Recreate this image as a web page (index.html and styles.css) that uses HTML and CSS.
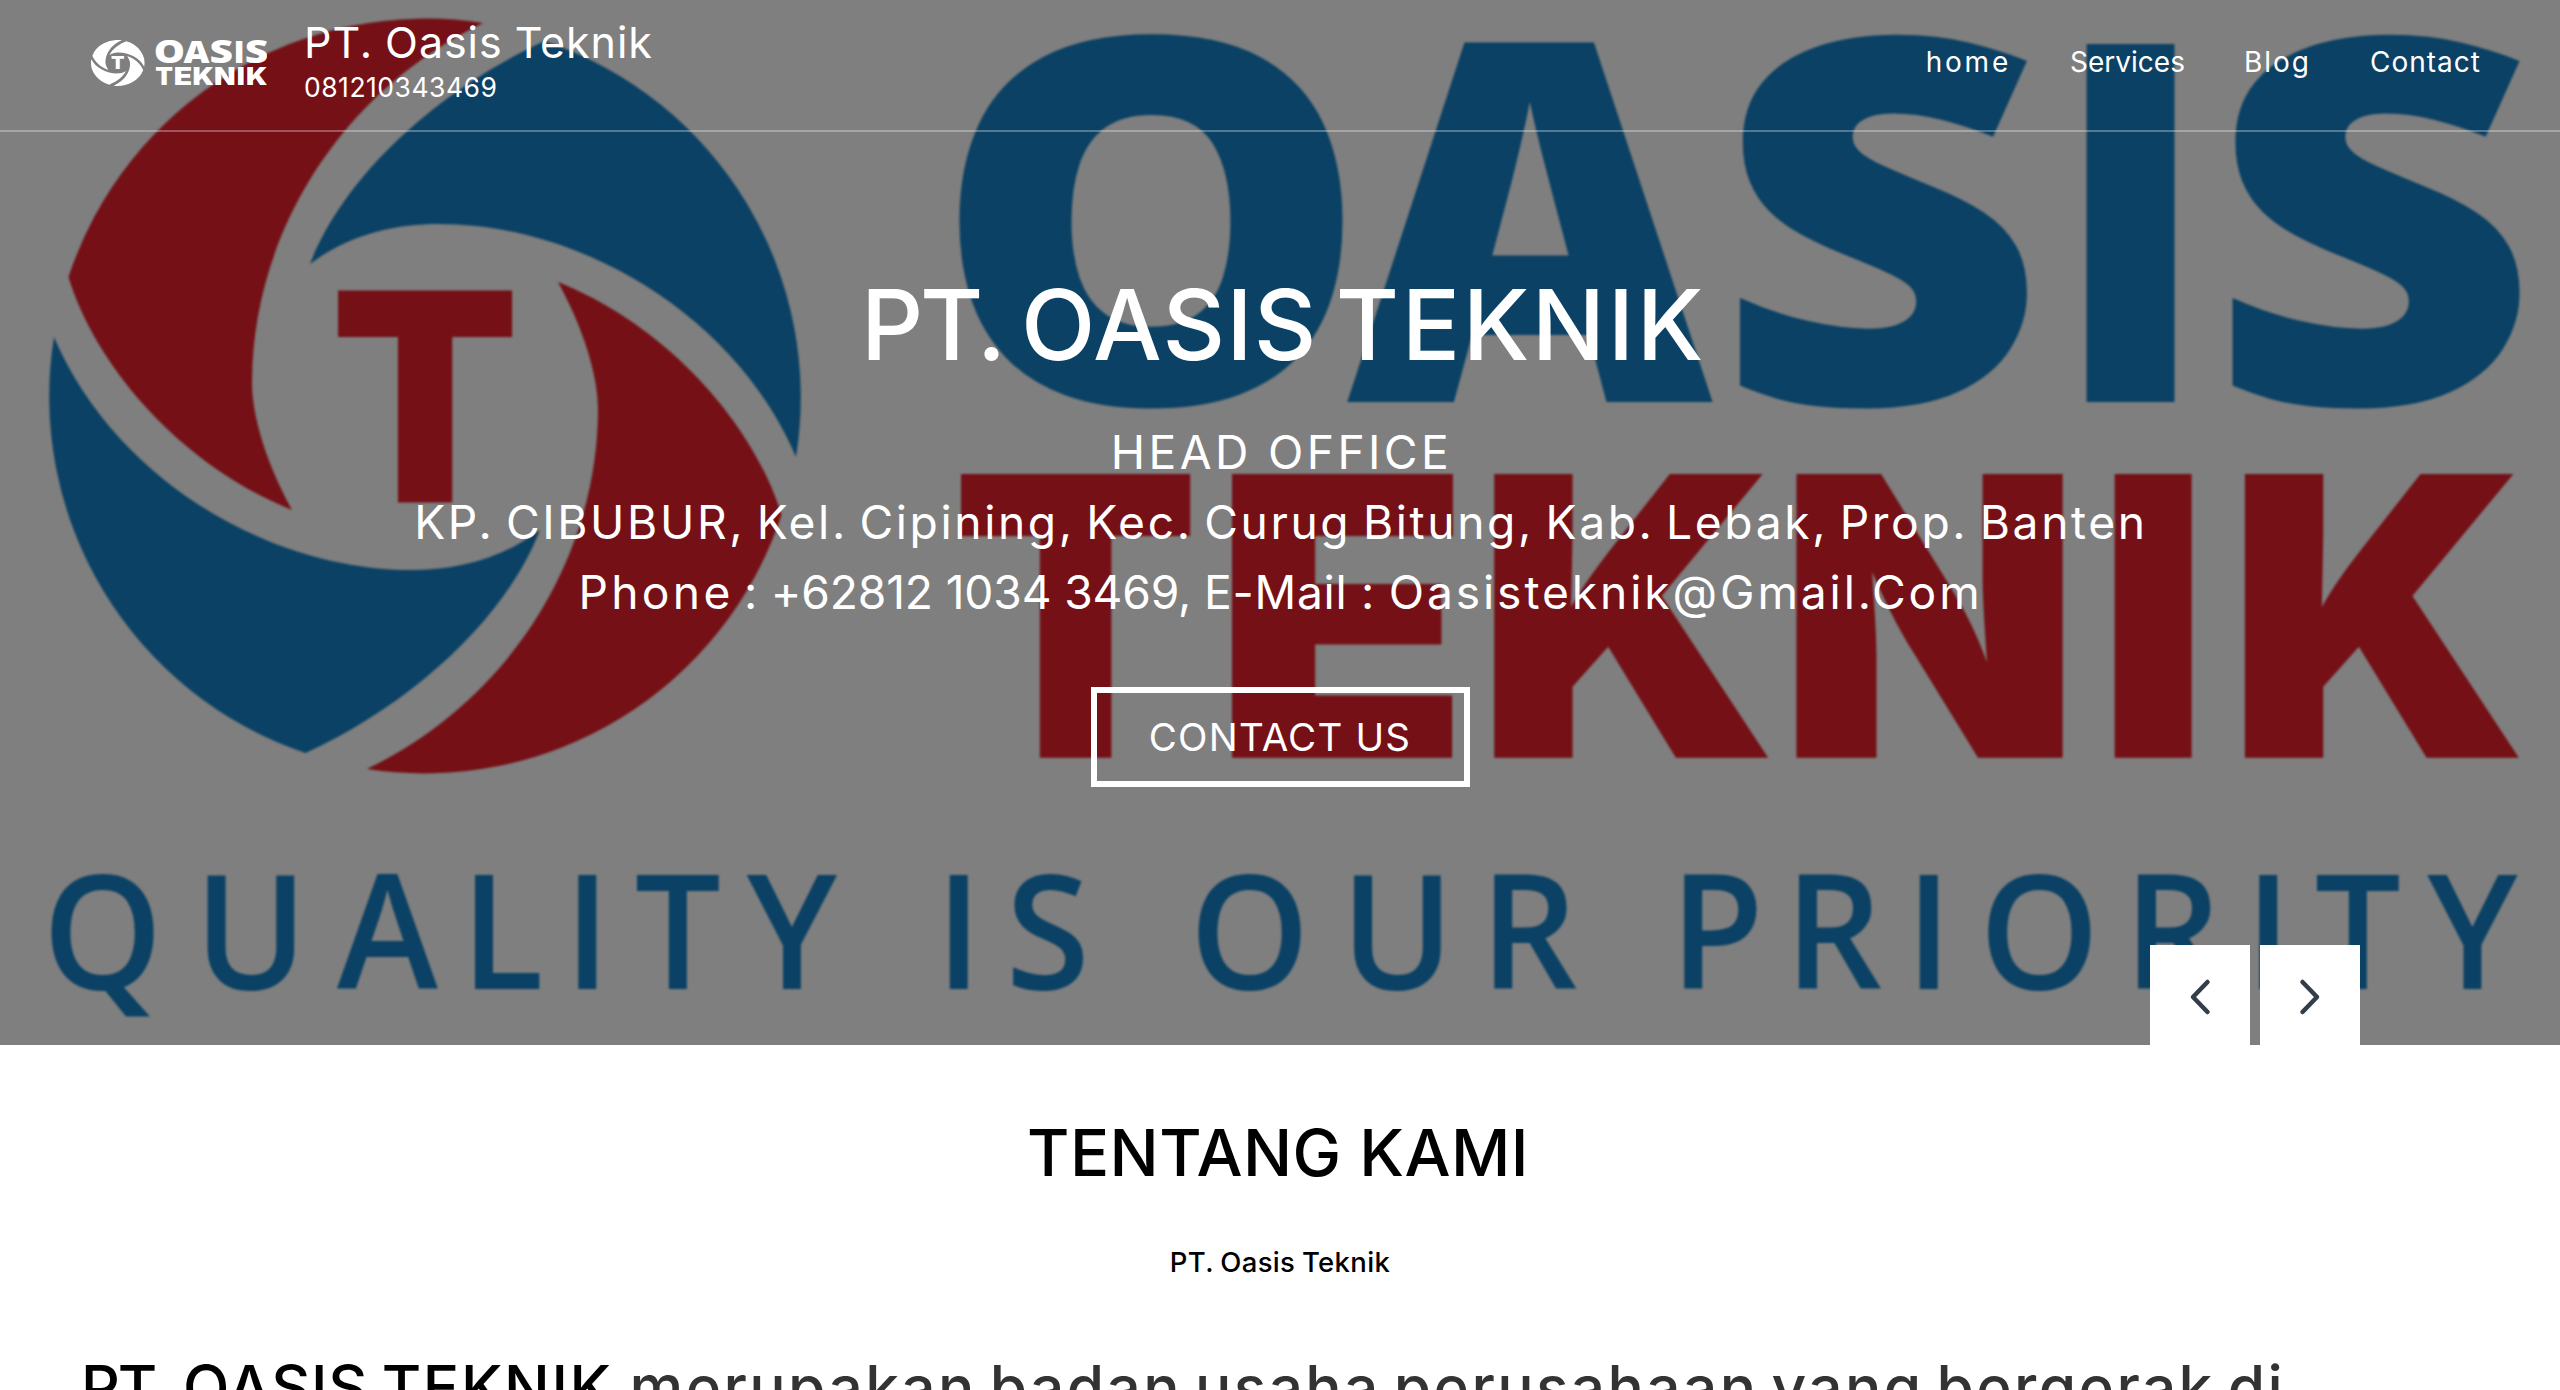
FILE: index.html
```
<!DOCTYPE html>
<html lang="id">
<head>
<meta charset="utf-8">
<title>PT. Oasis Teknik</title>
<link rel="stylesheet" href="styles.css">
</head>
<body>
<section class="hero">
  <svg class="hero-art" viewBox="0 0 2560 1045" preserveAspectRatio="none" aria-hidden="true">
    <defs>
      <g id="mark">
        <path class="red" id="swirl-red" d="M483 23A376 376 0 0 0 68.500 277C95 365 180 465 292 510C262 455 252 410 252 383C252 240 335 95 483 23Z"/>
        <use href="#swirl-red" transform="rotate(180 425 396)"/>
        <path class="blue" id="swirl-blue" d="M54 337A376 376 0 0 0 305.500 753C410 705 505 620 540 530C500 560 455 570 411 570C270 570 115 480 54 337Z"/>
        <use href="#swirl-blue" transform="rotate(180 425 397)"/>
        <text class="red mark-t" transform="scale(.945 1)" x="349.800" y="502.500">T</text>
        <g class="blue word-oasis">
          <text transform="translate(931.400 403.500) scale(1.1 1.015)">O</text>
          <text transform="translate(1347.300 402) scale(1.003 1)">A</text>
          <text transform="translate(1714.800 403.500) scale(1.144 1.015)">S</text>
          <text transform="translate(2051.600 402) scale(.904 1)">I</text>
          <text transform="translate(2207.400 403.500) scale(1.144 1.015)">S</text>
        </g>
        <g class="red word-teknik">
          <text transform="translate(951.100 757.700) scale(.93 1)">T</text>
          <text transform="translate(1212.300 757.700) scale(1.08 1)">E</text>
          <text transform="translate(1475.600 757.700) scale(1.018 1)">K</text>
          <text transform="translate(1778 757.700) scale(1.01 1)">N</text>
          <text transform="translate(2096.400 757.700)">I</text>
          <text transform="translate(2226.300 757.700) scale(1.018 1)">K</text>
        </g>
      </g>
    </defs>
    <use href="#mark"/>
    <text class="blue tagline" transform="scale(.96 1)" y="989.500" x="44.400 202.400 351.100 480 587.600 661.100 777.900 900 974.500 1047.700 1160 1239.100 1396.600 1541.800 1670 1739.700 1859.100 1985 2061.600 2212.200 2338.600 2411.300 2528.500">QUALITY IS OUR PRIORITY</text>
  </svg>

  <header class="topbar">
    <a class="brand" href="#">
      <svg class="brand-logo" viewBox="49 19 2472 756" preserveAspectRatio="none" role="img" aria-label="Oasis Teknik"><use href="#mark"/></svg>
      <span class="brand-text">
        <span class="brand-name">PT. Oasis Teknik</span>
        <span class="brand-phone">081210343469</span>
      </span>
    </a>
    <nav class="menu">
      <a class="menu-home" href="#">home</a>
      <a class="menu-services" href="#">Services</a>
      <a class="menu-blog" href="#">Blog</a>
      <a class="menu-contact" href="#">Contact</a>
    </nav>
  </header>

  <div class="hero-body">
    <h1 class="hero-title company"><span class="pt">PT.</span> <span class="oasis">OASIS</span> <span class="teknik">TEKNIK</span></h1>
    <p class="hero-line line-office">HEAD OFFICE</p>
    <p class="hero-line line-address">KP. CIBUBUR, Kel. Cipining, Kec. Curug Bitung, Kab. Lebak, Prop. Banten</p>
    <p class="hero-line line-phone"><span class="label-phone">Phone : </span><span class="number">+62812 1034 3469, </span><span class="label-mail">E-Mail : </span><span class="mail">Oasisteknik@Gmail.Com</span></p>
    <a class="hero-button" href="#">CONTACT US</a>
  </div>

  <div class="arrows">
    <button class="arrow" aria-label="Previous"><svg width="24" height="38" viewBox="0 0 24 38"><path d="M19.500 4L5 19L19.500 34"/></svg></button>
    <button class="arrow" aria-label="Next"><svg width="24" height="38" viewBox="0 0 24 38"><path d="M4.500 4L19 19L4.500 34"/></svg></button>
  </div>
</section>

<section class="about">
  <h2 class="about-title">TENTANG KAMI</h2>
  <p class="about-sub">PT. Oasis Teknik</p>
  <p class="about-text"><strong class="company"><span class="pt">PT.</span> <span class="oasis">OASIS</span> <span class="teknik">TEKNIK</span></strong> merupakan badan usaha perusahaan yang bergerak di</p>
</section>
</body>
</html>
```

FILE: styles.css
```
* {
  box-sizing: border-box;
}

body {
  margin: 0;
  height: 1390px;
  overflow: hidden;
  background: #fff;
  font-family: Inter, "Liberation Sans", sans-serif;
}

a {
  color: inherit;
  text-decoration: none;
}

h1, h2, p {
  margin: 0;
  white-space: nowrap;
}

/* Hero */
.hero {
  position: relative;
  height: 1045px;
  background: #7f7f7f;
  color: #fff;
}

.hero-art {
  position: absolute;
  inset: 0;
  width: 100%;
  height: 100%;
  filter: blur(1px);
  --logo-red: #751016;
  --logo-blue: #0a4164;
}

.red { fill: var(--logo-red); }
.blue { fill: var(--logo-blue); }

.mark-t { font: 900 291.4px Inter, sans-serif; }
.word-oasis { font: 800 501.6px "Open Sans", sans-serif; }
.word-teknik { font: 900 390px Inter, sans-serif; }
.tagline { font: 600 159px "Open Sans", sans-serif; }

/* Company name, kerned word by word */
.company { font-weight: 500; word-spacing: -.08em; }
.company .pt { letter-spacing: -.034em; }
.company .oasis { letter-spacing: .012em; }
.company .teknik { letter-spacing: .026em; }

/* Top bar */
.topbar {
  position: relative;
  display: flex;
  align-items: flex-start;
  justify-content: space-between;
  height: 132px;
  padding: 17px 79px 0 91px;
  border-bottom: 2px solid rgba(255, 255, 255, .3);
}

.brand {
  display: flex;
  gap: 37px;
}

.brand-logo {
  width: 176px;
  height: 46px;
  margin-top: 23px;
  --logo-red: #fff;
  --logo-blue: #fff;
}

.brand-text {
  display: flex;
  flex-direction: column;
}

.brand-name {
  font-size: 43px;
  line-height: 51px;
  letter-spacing: .95px;
  word-spacing: -1px;
}

.brand-phone {
  font-size: 26.5px;
  line-height: 39px;
  letter-spacing: .5px;
}

.menu {
  display: flex;
  gap: 59px;
  margin-top: 25px;
  font-size: 28px;
  line-height: 40px;
}

.menu-home { letter-spacing: 2.8px; }
.menu-services { letter-spacing: 0; }
.menu-blog { letter-spacing: 2px; }
.menu-contact { letter-spacing: 1px; }

/* Hero copy */
.hero-body {
  position: relative;
  display: flex;
  flex-direction: column;
  align-items: center;
  padding-top: 133px;
}

.hero-title {
  margin-bottom: 32px;
  padding-left: 7px;
  font-size: 97px;
  line-height: 120px;
}

.hero-line {
  font-size: 46.2px;
  line-height: 70px;
}

.line-office { letter-spacing: 3.39px; text-indent: 3px; }
.line-address { letter-spacing: 2.61px; word-spacing: -4px; text-indent: 2px; }
.line-phone { text-indent: 1px; }
.label-phone { letter-spacing: 3.3px; word-spacing: -6px; }
.number { letter-spacing: -.15px; }
.label-mail { letter-spacing: .7px; }
.mail { letter-spacing: 2.9px; }

.hero-button {
  width: 379px;
  height: 100px;
  margin-top: 60px;
  border: 6px solid #fff;
  font-size: 38.5px;
  line-height: 88px;
  letter-spacing: 1.2px;
  text-align: center;
}

/* Slider arrows */
.arrows {
  position: absolute;
  right: 200px;
  bottom: 0;
  display: flex;
  gap: 10px;
}

.arrow {
  display: grid;
  place-items: center;
  width: 100px;
  height: 100px;
  padding: 3px 0 0;
  border: 0;
  background: #fff;
}

.arrow path {
  fill: none;
  stroke: #333e4a;
  stroke-width: 4.5;
  stroke-linecap: round;
  stroke-linejoin: round;
}

/* About */
.about {
  padding: 68px 0 0 81px;
  color: #000;
}

.about-title {
  margin-left: -81px;
  padding-right: 4px;
  font-size: 65px;
  font-weight: 500;
  line-height: 80px;
  letter-spacing: .44px;
  text-align: center;
}

.about-sub {
  margin: 49px 0 60px -81px;
  font-size: 27.5px;
  font-weight: 500;
  line-height: 40px;
  letter-spacing: .35px;
  word-spacing: -1px;
  text-align: center;
}

.about-text {
  color: #333;
  font-size: 60.5px;
  font-weight: 500;
  line-height: 90px;
  letter-spacing: 2.35px;
  word-spacing: -5.5px;
}

.about-text strong {
  margin-right: 4px;
  color: #000;
}
```
